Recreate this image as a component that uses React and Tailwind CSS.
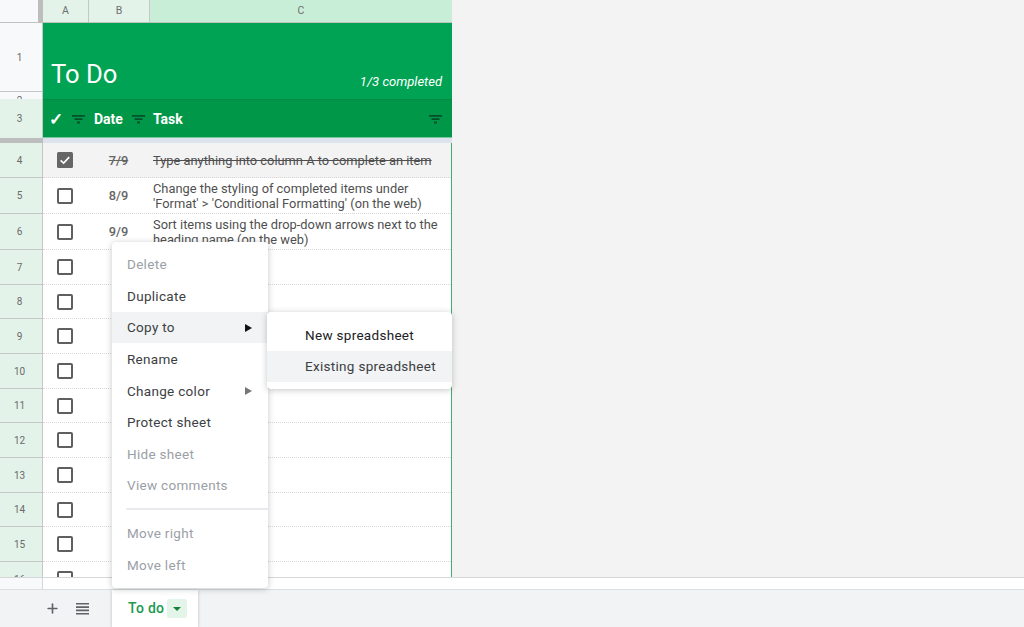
import { Plus } from "lucide-react";

const FONT = "font-['Roboto','Liberation_Sans',sans-serif]";

const ROWS = [
  { n: 4, h: "h-[35px]", done: true, date: "7/9", task: ["Type anything into column A to complete an item"] },
  { n: 5, h: "h-[36px]", date: "8/9", task: ["Change the styling of completed items under", "'Format' > 'Conditional Formatting' (on the web)"] },
  { n: 6, h: "h-[36px]", date: "9/9", task: ["Sort items using the drop-down arrows next to the", "heading name (on the web)"] },
  { n: 7, h: "h-[35px]" },
  { n: 8, h: "h-[34px]" },
  { n: 9, h: "h-[35px]" },
  { n: 10, h: "h-[35px]" },
  { n: 11, h: "h-[34px]" },
  { n: 12, h: "h-[35px]" },
  { n: 13, h: "h-[35px]" },
  { n: 14, h: "h-[34px]" },
  { n: 15, h: "h-[35px]" },
  { n: 16, h: "h-[35px]" },
];

function FilterIcon({ className }) {
  return (
    <svg width="13" height="9" viewBox="0 0 13 9" className={className}>
      <path d="M0 0h13v1.8H0zM2.5 3.2h8v1.8h-8zM5 6.4h3v2H5z" fill="#03502b" />
    </svg>
  );
}

function HamburgerIcon({ className }) {
  return (
    <svg width="13" height="12" viewBox="0 0 13 12" className={className}>
      <path d="M0 0h13v1.6H0zM0 3.3h13v1.6H0zM0 6.6h13v1.6H0zM0 9.9h13v1.6H0z" fill="#5f6368" />
    </svg>
  );
}

function Checkbox({ checked }) {
  if (checked) {
    return (
      <svg width="16" height="16" viewBox="0 0 16 16">
        <rect width="16" height="16" rx="1.5" fill="#666" />
        <path d="M3.6 8.3l3 2.8 5.6-6" fill="none" stroke="#fff" strokeWidth="1.6" />
      </svg>
    );
  }
  return <div className="h-4 w-4 rounded-[2px] border-2 border-[#5f5f5f] bg-white" />;
}

function SheetRow({ row }) {
  return (
    <div className={`flex ${row.h} shrink-0 ${row.done ? "bg-[#f3f3f3]" : "bg-white"}`}>
      <div className="flex w-[43px] shrink-0 items-center justify-center border-r border-b border-[#c4c7c5] bg-[#e3f3e9] pr-[3px] text-[10px] text-[#6a6a6a]">
        {row.n}
      </div>
      <div className="flex min-w-0 flex-1 border-b border-dotted border-[#d6d6d6]">
        <div className="flex w-[44px] shrink-0 items-center justify-center">
          <Checkbox checked={row.done} />
        </div>
        <div className={`ml-px flex w-[61px] shrink-0 items-center justify-center pt-px text-[12.8px] font-medium text-[#666] ${row.done ? "line-through" : ""}`}>
          {row.date}
        </div>
        <div className={`flex min-w-0 flex-1 flex-col justify-center pt-px pl-[4px] text-[12.85px] leading-[15.5px] whitespace-nowrap text-[#4f4f4f] ${row.done ? "line-through" : ""}`}>
          {row.task && row.task.map((t) => <div key={t}>{t}</div>)}
        </div>
      </div>
      <div className="w-px shrink-0 bg-[#45ab72]" />
    </div>
  );
}

function Sheet() {
  return (
    <div className="flex h-[577px] w-[452px] shrink-0 flex-col overflow-hidden bg-white">
      {/* column headers */}
      <div className="flex h-[23px] shrink-0 border-b border-[#bfc3c0] text-[10.5px] text-[#6f6f6f]">
        <div className="w-[38px] bg-[#f8f9fb]" />
        <div className="w-[5px] bg-[#bdbdbd]" />
        <div className="flex w-[46px] items-center justify-center border-r border-[#c4c7c5] bg-[#e3f3e9]">A</div>
        <div className="flex w-[60px] items-center justify-center bg-[#e3f3e9]">B</div>
        <div className="flex flex-1 items-center justify-center border-l border-[#c4c7c5] bg-[#c9eed7]">C</div>
      </div>

      {/* title rows */}
      <div className="flex h-[76px] shrink-0">
        <div className="flex w-[43px] shrink-0 flex-col border-r border-[#c4c7c5] bg-[#f8f9fb] text-[10px] text-[#6a6a6a]">
          <div className="flex h-[69px] items-center justify-center border-b border-[#c4c7c5] pr-[3px]">1</div>
          <div className="h-[7px] overflow-hidden pt-[3px] pr-[3px] text-center leading-[12px]">2</div>
        </div>
        <div className="flex min-w-0 flex-1 items-end justify-between bg-[#00a354] pr-[10px] pb-[10px] pl-[8px] text-white">
          <span className="text-[25.6px] leading-[30px]">To Do</span>
          <span className="text-[13px] leading-[15px] italic">1/3 completed</span>
        </div>
      </div>

      {/* heading row */}
      <div className="flex h-[39px] shrink-0">
        <div className="flex w-[43px] shrink-0 items-center justify-center border-r border-[#c4c7c5] bg-[#e3f3e9] pr-[3px] text-[10px] text-[#6a6a6a]">3</div>
        <div className="flex min-w-0 flex-1 items-center border-t border-b border-t-[#048a45] border-b-[#7cc79f] border-b-dotted bg-[#019748] pt-px pr-[10px] text-[14px] font-bold text-white">
          <span className="ml-[6px] w-[14px] text-[17px] leading-none font-bold">✓</span>
          <FilterIcon className="ml-[9px]" />
          <span className="ml-[9px]">Date</span>
          <FilterIcon className="ml-[9px]" />
          <span className="ml-[8px]">Task</span>
          <FilterIcon className="ml-auto" />
        </div>
      </div>

      {/* frozen divider */}
      <div className="flex h-[5px] shrink-0">
        <div className="w-[43px] bg-[#bdbdbd]" />
        <div className="flex-1 bg-[#dce3ec]" />
      </div>

      {ROWS.map((r) => (
        <SheetRow key={r.n} row={r} />
      ))}
    </div>
  );
}

function MenuItem({ label, disabled, active, arrow, dimArrow }) {
  return (
    <div className={`flex h-[31.6px] items-center justify-between pr-[16px] pl-[15px] text-[13.5px] tracking-[0.3px] ${disabled ? "text-[#9aa0a6]" : "text-[#3c4043]"} ${active ? "bg-[#f1f3f4]" : ""}`}>
      <span>{label}</span>
      {arrow && <span className={`h-0 w-0 border-y-[4px] border-l-[7px] border-y-transparent ${dimArrow ? "border-l-[#777]" : "border-l-[#111]"}`} />}
    </div>
  );
}

function SheetMenu() {
  return (
    <div className="absolute top-[242px] left-[112px] w-[156px] rounded-[4px] bg-white pt-[6.6px] pb-[7px] shadow-[0_1px_6px_rgba(60,64,67,0.3)]">
      <MenuItem label="Delete" disabled />
      <MenuItem label="Duplicate" />
      <MenuItem label="Copy to" active arrow />
      <MenuItem label="Rename" />
      <MenuItem label="Change color" arrow dimArrow />
      <MenuItem label="Protect sheet" />
      <MenuItem label="Hide sheet" disabled />
      <MenuItem label="View comments" disabled />
      <div className="my-[7px] ml-[14px] h-[2px] bg-[#e8eaed]" />
      <MenuItem label="Move right" disabled />
      <MenuItem label="Move left" disabled />
    </div>
  );
}

function CopyMenu() {
  return (
    <div className="absolute top-[312px] left-[267px] w-[185px] rounded-[4px] bg-white py-[7px] shadow-[0_1px_6px_rgba(60,64,67,0.3)]">
      <div className="flex h-[31.5px] items-center pl-[38px] text-[13.5px] tracking-[0.3px] text-[#202124]">New spreadsheet</div>
      <div className="flex h-[31.5px] items-center bg-[#f1f3f4] pl-[38px] text-[13.5px] tracking-[0.3px] text-[#3c4043]">Existing spreadsheet</div>
    </div>
  );
}

function TabBar() {
  return (
    <div className="shrink-0">
      <div className="flex h-[12px] border-t border-[#d4d6d8] bg-white">
        <div className="w-[43px] border-r border-[#d4d6d8] bg-[#f8f9fa]" />
      </div>
      <div className="flex h-[38px] items-stretch border-t border-[#dcdee0] bg-[#f1f3f4]">
        <div className="flex w-[112px] items-center pl-[45px]">
          <Plus size={15} strokeWidth={2.6} className="text-[#5f6368]" />
          <HamburgerIcon className="ml-[16px]" />
        </div>
        <div className="flex w-[86px] items-center bg-white pl-[16px] shadow-[0_1px_3px_rgba(60,64,67,0.3)]">
          <span className="text-[14px] font-medium tracking-[0.3px] text-[#1a9a4e]">To do</span>
          <span className="ml-[3px] flex h-[19px] w-[20px] items-center justify-center rounded-[2px] bg-[#e3f5e9]">
            <span className="h-0 w-0 border-x-[4px] border-t-[4px] border-x-transparent border-t-[#188038]" />
          </span>
        </div>
      </div>
    </div>
  );
}

export default function App() {
  return (
    <div className={`relative flex h-[627px] w-[1024px] flex-col overflow-hidden bg-[#f3f3f3] ${FONT}`}>
      <Sheet />
      <TabBar />
      <SheetMenu />
      <CopyMenu />
    </div>
  );
}
